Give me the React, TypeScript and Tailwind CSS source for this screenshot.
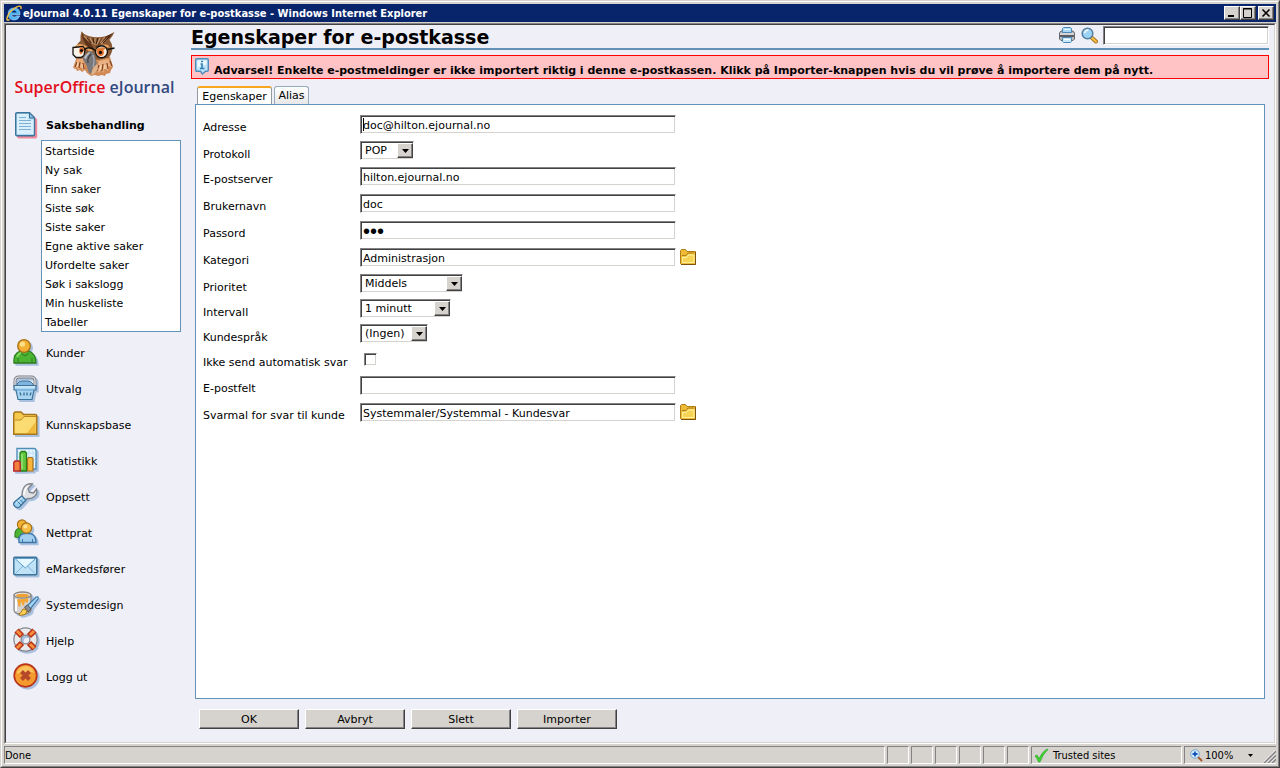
import type { ReactNode } from 'react'
import clsx from 'clsx'

// ─── Shared bevels ────────────────────────────────────────────────────────────

const SUNKEN =
  'border border-t-[#848284] border-l-[#848284] border-r-white border-b-white bg-white shadow-[inset_1px_1px_#424142,inset_-1px_-1px_#d6d3ce]'
const RAISED =
  'border border-t-white border-l-white border-r-[#424142] border-b-[#424142] bg-[#d6d3ce] shadow-[inset_-1px_-1px_#848284]'
const PANE = 'border border-t-[#848284] border-l-[#848284] border-r-white border-b-white'

// ─── Icons ────────────────────────────────────────────────────────────────────

/** 28px sidebar icon with the soft blue drop shadow. */
function NavSvg({ children, shadow = 'blue' }: { children: ReactNode; shadow?: 'blue' | 'red' }) {
  return (
    <svg
      viewBox="0 0 28 28"
      aria-hidden="true"
      className={clsx(
        'w-7 h-7 shrink-0',
        shadow === 'blue'
          ? 'drop-shadow-[2px_2px_0px_#a9c0df]'
          : 'drop-shadow-[2px_2px_0px_#f08a9c]',
      )}
    >
      {children}
    </svg>
  )
}

function DocumentIcon() {
  return (
    <NavSvg shadow="red">
      <path d="M2 .7h12.500l5 5v17q0 1-1 1H2q-1.300 0-1.300-1.300V2Q.7.7 2 .7z" fill="#a9d6f2" stroke="#3d7399" strokeWidth="1.400" />
      <path d="M2 2h11.500v5.500h5V22H2z" fill="#d9f0fc" />
      <path d="M14.500 1v5h5z" fill="#8fc3e6" stroke="#3d7399" />
      <path d="M4 5.500h7M4 8.500h12M4 11.500h12M4 14.500h12M4 17.500h12" stroke="#7db0d6" />
    </NavSvg>
  )
}

function CustomerIcon() {
  return (
    <NavSvg>
      <path d="M1 24q-1-9 6-12h9q7 3 7 12z" fill="#4cb432" stroke="#2b7a1c" strokeWidth="1.3" />
      <path d="M5 23v-4M19 23v-4M8 14l4 3 4-3" stroke="#2b7a1c" fill="none" />
      <path d="M4 18q2-4 4-4" stroke="#8be06a" fill="none" strokeWidth="1.5" />
      <circle cx="11" cy="7" r="6.300" fill="#f2b132" stroke="#a8701a" strokeWidth="1.3" />
      <circle cx="9.500" cy="5" r="2.600" fill="#fdde8a" />
    </NavSvg>
  )
}

function BasketIcon() {
  return (
    <NavSvg>
      <path d="M4 9q2-3 5-3h6q3 0 5 3v3H4z" fill="#7fb4de" stroke="#3d7399" />
      <path d="M2 12V6q0-4 4-4h12q4 0 4 4v6" fill="none" stroke="#7b7f86" strokeWidth="3" />
      <path d="M2 12V6q0-4 4-4h12q4 0 4 4v6" fill="none" stroke="#e6e8eb" strokeWidth="1.200" />
      <path d="M1 10.500h22V15h-2l-2 9.500H5L3 15H1z" fill="#a9d4f2" stroke="#3d7399" strokeWidth="1.200" />
      <path d="M2 12h20" stroke="#e2f4fe" />
      <path d="M3 15h18" stroke="#5d9cc8" />
      <path d="M7 17.500l1 3M11 17.500v3M14 17.500v3M18 17.500l-1 3" stroke="#3d7399" strokeWidth="1.400" />
    </NavSvg>
  )
}

function FolderIcon() {
  return (
    <NavSvg>
      <path d="M.7 23.300V2.500L2 1h6l2.500 2.500h11.800q1.500 0 1.500 1.500v18.300z" fill="#f5c94e" stroke="#a87419" strokeWidth="1.4" />
      <path d="M2 9h6l3-3h11.500v16H2z" fill="#fbdc72" />
      <path d="M2 9h6l3-3.500H23" fill="none" stroke="#c08a22" />
      <path d="M14 22l8.500-11v11z" fill="#efb93c" />
    </NavSvg>
  )
}

function ChartIcon() {
  return (
    <NavSvg>
      <path d="M4 1.500h17q2 0 2 2V22H4z" fill="#e6f5fd" stroke="#4f8db8" strokeWidth="1.4" />
      <path d="M5 6h18M5 10h18M5 14h18M8 2v20M12 2v20M16 2v20M20 2v20" stroke="#b6dbf0" strokeWidth=".8" />
      <path d="M7 24V6l1.500-1.500h3.500L13.500 6v18z" fill="#63c63c" stroke="#23801a" strokeWidth="1.3" />
      <path d="M14.500 24V12l1-1.500h3.500l1 1.500v12z" fill="#f7b53e" stroke="#a8701a" strokeWidth="1.2" />
      <path d="M.8 24v-8.500L2 14h4l1.200 1.500V24z" fill="#f0803c" stroke="#b8262a" strokeWidth="1.4" />
      <path d="M9 7v15" stroke="#b5ee94" />
    </NavSvg>
  )
}

function WrenchIcon() {
  return (
    <NavSvg>
      <path
        d="M9 13q0-9 5-11.500Q17 .3 19.500 1L15 5.500l1.500 4 4 .5L23.500 6q1.500 5-2 7.500-3 2.500-7 2L12 17z"
        fill="#dfe1e4"
        stroke="#7e8187"
        strokeWidth="1.3"
      />
      <path d="M11 12q0-6 4-8.500" stroke="#fff" fill="none" strokeWidth="1.400" />
      <path d="M1.500 19l7-6 4.500 4-6.500 7q-2 1.500-4.500-.5t-.5-4.500z" fill="#9fd0f2" stroke="#3d7399" strokeWidth="1.3" />
      <path d="M3.500 17.500l4.500 4.500M6 15.500l4.500 4.500" stroke="#3d7399" />
      <path d="M3 20.500l6-6" stroke="#dff3fd" />
    </NavSvg>
  )
}

function ChatIcon() {
  return (
    <NavSvg>
      <path d="M2 18q-1-8 5-9h5l1 10z" fill="#4cb432" stroke="#2b7a1c" strokeWidth="1.2" />
      <circle cx="9" cy="5.500" r="4.600" fill="#f2b132" stroke="#a8701a" strokeWidth="1.2" />
      <path d="M6 23.500q-1-8 5-9h6q6 1 6 9z" fill="#a2cff0" stroke="#3f76a8" strokeWidth="1.3" />
      <path d="M9.500 23v-3M19.500 23v-3" stroke="#3f76a8" />
      <circle cx="13.500" cy="9" r="5.200" fill="#f6bd42" stroke="#a8701a" strokeWidth="1.2" />
      <circle cx="12.300" cy="7.500" r="2" fill="#fde39a" />
    </NavSvg>
  )
}

function MailIcon() {
  return (
    <NavSvg>
      <rect x=".8" y="2.300" width="23" height="17.500" rx="1" fill="#bfe2f7" stroke="#3d7399" strokeWidth="1.5" />
      <path d="M2.500 18.500l8-8M22 18.500l-8-8" stroke="#7fb4de" />
      <path d="M2 3.500L12.300 13 22.700 3.500z" fill="#e4f6fe" stroke="#5d9cc8" />
    </NavSvg>
  )
}

function PaintIcon() {
  return (
    <NavSvg>
      <path d="M1 4v15q0 4 8 4t9-4V4z" fill="#d6d3d0" stroke="#8a8784" strokeWidth="1.2" />
      <path d="M3 8v12" stroke="#fff" strokeWidth="2" />
      <ellipse cx="9.500" cy="4" rx="8.500" ry="3" fill="#e6e4e2" stroke="#8a8784" strokeWidth="1.300" />
      <ellipse cx="9.500" cy="4.500" rx="6.500" ry="1.800" fill="#f0a030" />
      <path d="M4 8q5 1 11-1v4q-2 2-3-1l-1 4q-2 2-2-2l-1-1-1 5q-2 0-2-4z" fill="#f4a733" />
      <path d="M14 15L23 6q3-1 2 2l-8 10z" fill="#a4d2f4" stroke="#3f76a8" strokeWidth="1.200" />
      <path d="M11.500 16l3-2 3.500 4-3 3z" fill="#8a8d93" stroke="#55585e" />
      <path d="M6 23q2-1 4-5 3-1 4 3-2 4-8 3z" fill="#f9cf56" stroke="#a8701a" />
    </NavSvg>
  )
}

function LifebuoyIcon() {
  return (
    <NavSvg>
      <circle cx="12.500" cy="12.500" r="8" fill="none" stroke="#84868b" strokeWidth="8.400" />
      <circle cx="12.500" cy="12.500" r="8" fill="none" stroke="#e9eaec" strokeWidth="6" />
      <path d="M3.500 3.500L9 9M21.500 3.500L16 9M3.500 21.500L9 16M21.500 21.500L16 16" stroke="#b93018" strokeWidth="6" />
      <path d="M4 4l4 4M21 4l-4 4M4 21l4-4M21 21l-4-4" stroke="#f7903c" strokeWidth="3" />
    </NavSvg>
  )
}

function LogoutIcon() {
  return (
    <NavSvg>
      <circle cx="12.500" cy="12.500" r="11.300" fill="#f59a2e" stroke="#b8321c" strokeWidth="1.700" />
      <path d="M3.500 11q2-8 10-8 6 1 8 7-8-3-18 1z" fill="#fcc35a" />
      <path d="M8.500 8.500l8 8M16.500 8.500l-8 8" stroke="#b5472b" strokeWidth="4" />
    </NavSvg>
  )
}

function OwlLogo() {
  return (
    <svg viewBox="0 0 46 46" aria-hidden="true" className="w-[46px] h-[46px]">
      {/* breast feathers */}
      <path d="M5 25L1 37l3 1 1 2 3-1 2 2 3-2 2 3 4 3 4-1 3 1 4-1 3 1 1-2 4-1 1-3 2-3-3-10-8-4z" fill="#cf8a55" />
      <path d="M5 28L2 37l3-1 1 3 3-3 2 4 2-4-2-8z" fill="#e9a877" />
      <path d="M27 30l-3 9 3 3 2-4 2 4 2-5 3 3 1-5 3 1-4-8z" fill="#e9b183" />
      <path d="M5 31l-2 5M8 31l-1 6M11 32l1 6M27 34l-2 6M31 33l-1 7M35 32l1 6M38 30l2 5" stroke="#84441f" strokeWidth="1.200" />
      <path d="M6 31l-1 5M10 33v4M29 34l-1 5M33 34v4" stroke="#fbe0bd" />
      {/* head and ear tufts */}
      <path d="M9.500.3q3 4 8 5 4 1 7 1 11 0 18-5.500-2 5-5 8 3 4 3 9-1 6-4 9l-10 2-15-1-8-7q-1-6 5-11Q8 5 9.500.3z" fill="#8a5a35" />
      <path d="M10 2q3 7 9 11l3 5-6-2Q10 10 10 2zM41 2q-6 9-13 11l-5 5q3-10 18-16z" fill="#5c3218" />
      <path d="M12 5l5 5M18 7l3 6M23 7v7M28 7l-3 7M33 6l-5 6M36 7l-7 6" stroke="#c99a6c" strokeWidth="1.100" />
      <path d="M15 7l4 5M21 7l1 5M26 7l-2 6M38 5l-7 7" stroke="#3a1d0d" />
      {/* brows */}
      <path d="M3 15q5-4 11 0l7 4-2 3-6-5q-5-2-10 0zM23 18q6-6 13-4l2 3q-7-3-14 5z" fill="#e7a35f" />
      {/* eyes and glasses */}
      <path d="M1 16.500l10-1 2 3-1 6-3 2H4l-3-3z" fill="#faf3ea" stroke="#15110f" strokeWidth="1.300" />
      <path d="M8 16.500q4-1 4 3l-3 4q-3-2-1-7z" fill="#df6c2b" />
      <circle cx="9.500" cy="19.500" r="1.600" fill="#16100c" />
      <circle cx="29.500" cy="20.800" r="6" fill="#f8ede0" stroke="#15110f" strokeWidth="1.400" />
      <path d="M24 18q5-3 10-1l-2 2-7 2z" fill="#d8843e" />
      <circle cx="28.500" cy="21.500" r="3.400" fill="#e8702a" />
      <circle cx="28.500" cy="21.500" r="1.700" fill="#16100c" />
      <path d="M35.500 18.500l7-1.500M12 18.500q5-4 11.500 1" fill="none" stroke="#15110f" strokeWidth="1.500" />
      {/* beak */}
      <path d="M18 20q3 0 5 5l2 8-4 4-2 6q-3-1-4-8l-3-5-1.500-3q3-5 7.500-7z" fill="#77777c" />
      <path d="M17 21q-4 3-5 6l2 1q1-4 4-6z" fill="#c2c3c8" />
      <path d="M19 23q-4 4-3 9" fill="none" stroke="#38383d" strokeWidth="1.100" />
      <path d="M21 24q2 5 0 12" fill="none" stroke="#a9aaaf" strokeWidth="1.300" />
      <path d="M25 33l1 5-4 5-3 1 2-7z" fill="#dfb28a" />
    </svg>
  )
}

function PrinterIcon() {
  return (
    <svg viewBox="0 0 16 16" aria-hidden="true" className="w-4 h-4">
      <path d="M2 4h12l1.500 2v6L14 13.500H2L.5 12V6z" fill="#b9bbbf" stroke="#63676e" />
      <path d="M3.500 5.500v-4l1-1h7l1 1v4z" fill="#a8d8f5" stroke="#4d89b4" />
      <path d="M5 2.500h6" stroke="#e8f7ff" />
      <path d="M1 7h14" stroke="#eeeff0" />
      <path d="M1 9h14" stroke="#5a5e64" strokeWidth="2" />
      <path d="M3.500 10.500h9v4l-1 1h-7l-1-1z" fill="#c7e8fa" stroke="#4d89b4" />
      <path d="M5 12.500h6" stroke="#fff" />
    </svg>
  )
}

function SearchIcon() {
  return (
    <svg viewBox="0 0 17 17" aria-hidden="true" className="w-[17px] h-[17px]">
      <path d="M10 10l5 4.500" stroke="#a8701a" strokeWidth="4" strokeLinecap="round" />
      <path d="M10.500 10.500l4.500 4" stroke="#f8c14a" strokeWidth="2" strokeLinecap="round" />
      <circle cx="6.500" cy="6.500" r="5.300" fill="#9dd3f5" stroke="#557f9f" strokeWidth="1.500" />
      <path d="M3.500 6q1-3 4-3" fill="none" stroke="#fff" strokeWidth="1.500" />
    </svg>
  )
}

function InfoIcon() {
  return (
    <svg viewBox="0 0 14 17" aria-hidden="true" className="w-[14px] h-[17px] shrink-0">
      <path d="M2 .7h10q1.300 0 1.300 1.300v10q0 1.300-1.300 1.300h-1.500L7.500 16l-2-2.700H2Q.7 13.300.7 12V2Q.7.700 2 .700z" fill="#bfe4f8" stroke="#4d8cba" strokeWidth="1.400" />
      <path d="M2.500 2.500h9v4q-5 0-9 3z" fill="#eaf8ff" />
      <path d="M6 3.500h2M5.500 6H7v4M5 10.500h4.500" stroke="#2f7fb8" strokeWidth="1.600" fill="none" />
    </svg>
  )
}

function SmallFolderIcon() {
  return (
    <svg viewBox="0 0 16 16" aria-hidden="true" className="w-4 h-4">
      <path d="M.5 14.500V1.500L1.500.500h4L7 2.500h8.500v13h-14z" fill="#eebb36" stroke="#b07d17" />
      <path d="M2 14V7.500h4L8 5h6.500v9z" fill="#f7d355" />
      <path d="M2.500 13.500v-5h4L8.500 6H14v7.500z" stroke="#fff0a0" fill="none" />
      <path d="M2 6.500h4l2-2.500h6" stroke="#b07d17" fill="none" />
      <path d="M1 15.500h14.500V3" stroke="#7d520e" fill="none" />
    </svg>
  )
}

function IeIcon() {
  return (
    <svg viewBox="0 0 16 16" aria-hidden="true" className="w-4 h-4">
      <path d="M14 9.800H5.500q.3 2.200 2.700 2.200 1.500 0 2.300-1h3.200q-1.500 4-5.500 4-6-.5-6-6 0-6 6-6 6 0 5.800 6.800z" fill="#4fb2f2" stroke="#c3e8fd" strokeWidth=".6" />
      <path d="M5.700 7.500h4.800q-.5-2-2.400-2T5.700 7.500z" fill="#0a246a" />
      <path d="M3.500 14.500q-3 1.500-2.500-1Q2 8 7.500 4T14.500 1.500q1 .5.300 2.500" fill="none" stroke="#f3c13a" strokeWidth="1.400" />
    </svg>
  )
}

function DownArrow() {
  return (
    <svg viewBox="0 0 7 4" aria-hidden="true" className="w-[7px] h-1">
      <path d="M0 0h7L3.500 4z" fill="#000" />
    </svg>
  )
}

// ─── Title bar ────────────────────────────────────────────────────────────────

function TitleBar() {
  const button = clsx(RAISED, 'w-4 h-[14px] flex items-center justify-center')
  return (
    <header className="h-[18px] shrink-0 bg-[#08246b] flex items-center pl-[2px] pr-[2px]">
      <IeIcon />
      <h1 className="flex-1 pl-px pt-px font-['DejaVu_Sans_Condensed','DejaVu_Sans',sans-serif] font-bold text-[11px] leading-4 text-white whitespace-nowrap">
        eJournal 4.0.11 Egenskaper for e-postkasse - Windows Internet Explorer
      </h1>
      <button type="button" aria-label="Minimize" className={button}>
        <svg viewBox="0 0 10 10" className="w-[10px] h-[10px]"><path d="M1 8h6" stroke="#000" strokeWidth="2" /></svg>
      </button>
      <button type="button" aria-label="Maximize" className={button}>
        <svg viewBox="0 0 10 10" className="w-[10px] h-[10px]"><path d="M.5 9.500v-9h8v9zM0 1h9" stroke="#000" fill="none" /></svg>
      </button>
      <button type="button" aria-label="Close" className={clsx(button, 'ml-[2px]')}>
        <svg viewBox="0 0 10 10" className="w-[10px] h-[10px]"><path d="M1.500 1.500l7 7M8.500 1.500l-7 7" stroke="#000" strokeWidth="1.600" /></svg>
      </button>
    </header>
  )
}

// ─── Sidebar ──────────────────────────────────────────────────────────────────

const SUBMENU = [
  'Startside',
  'Ny sak',
  'Finn saker',
  'Siste søk',
  'Siste saker',
  'Egne aktive saker',
  'Ufordelte saker',
  'Søk i sakslogg',
  'Min huskeliste',
  'Tabeller',
]

const MODULES = [
  { label: 'Kunder', Icon: CustomerIcon },
  { label: 'Utvalg', Icon: BasketIcon },
  { label: 'Kunnskapsbase', Icon: FolderIcon },
  { label: 'Statistikk', Icon: ChartIcon },
  { label: 'Oppsett', Icon: WrenchIcon },
  { label: 'Nettprat', Icon: ChatIcon },
  { label: 'eMarkedsfører', Icon: MailIcon },
  { label: 'Systemdesign', Icon: PaintIcon },
  { label: 'Hjelp', Icon: LifebuoyIcon },
  { label: 'Logg ut', Icon: LogoutIcon },
]

function Sidebar() {
  return (
    <aside className="w-[185px] shrink-0">
      <div className="flex flex-col items-center pt-[6px] pr-[8px] h-[82px]">
        <OwlLogo />
        <div className="font-['Open_Sans','Noto_Sans',sans-serif] font-semibold text-[16px] leading-5 whitespace-nowrap text-[#e30f1c]">
          SuperOffice <span className="text-[#33497f]">eJournal</span>
        </div>
      </div>

      <nav>
        <a href="#saksbehandling" className="flex items-center gap-[5px] pl-[7px] h-[33px] pt-1 font-bold">
          <span className="pl-[2px] -mr-[2px] flex"><DocumentIcon /></span>
          Saksbehandling
        </a>
        <ul className="ml-[35px] mr-[10px] bg-white border border-[#6392b9]">
          {SUBMENU.map(item => (
            <li key={item} className="h-[19px] pl-[3px] pt-[3px]">
              <a href="#meny">{item}</a>
            </li>
          ))}
        </ul>
        <ul className="pt-[3px]">
          {MODULES.map(({ label, Icon }) => (
            <li key={label}>
              <a href="#modul" className="flex items-center gap-[5px] pl-[7px] h-9">
                <Icon />
                <span className="pt-[2px]">{label}</span>
              </a>
            </li>
          ))}
        </ul>
      </nav>
    </aside>
  )
}

// ─── Form ─────────────────────────────────────────────────────────────────────

interface RowProps {
  id: string
  label: string
  /** Height of the row; differs per control type. */
  height: string
  children: ReactNode
}

function Row({ id, label, height, children }: RowProps) {
  return (
    <div className={clsx('flex items-start', height)}>
      <label htmlFor={id} className="w-[157px] shrink-0 pt-[9px] leading-4 whitespace-nowrap">
        {label}
      </label>
      {children}
    </div>
  )
}

interface TextRowProps {
  id: string
  label: string
  value?: string
  type?: 'text' | 'password'
  browse?: boolean
  caret?: boolean
}

function TextRow({ id, label, value = '', type = 'text', browse, caret }: TextRowProps) {
  return (
    <Row id={id} label={label} height="h-[27px]">
      <span className="relative flex mt-1">
        <input
          id={id}
          type={type}
          defaultValue={value}
          className={clsx(
            SUNKEN,
            'w-[316px] h-[19px] px-[2px] pt-px outline-none',
            type === 'password' && "font-['Liberation_Sans',sans-serif] text-[20px]",
          )}
        />
        {caret && <span className="absolute left-[3px] top-[3px] w-px h-[13px] bg-black" />}
      </span>
      {browse && (
        <button type="button" aria-label={`Velg ${label}`} className="ml-1 mt-[5px]">
          <SmallFolderIcon />
        </button>
      )}
    </Row>
  )
}

function SelectRow({ id, label, value, width }: { id: string; label: string; value: string; width: string }) {
  return (
    <Row id={id} label={label} height="h-[25px]">
      <span className="relative flex mt-[3px]">
        <select id={id} className={clsx(SUNKEN, width, 'h-[19px] pl-1 pt-px appearance-none outline-none')}>
          <option>{value}</option>
        </select>
        <span
          className={clsx(
            RAISED,
            'absolute right-px top-[2px] w-4 h-[15px] flex items-center justify-center pointer-events-none',
          )}
        >
          <DownArrow />
        </span>
      </span>
    </Row>
  )
}

function MailboxForm() {
  return (
    <form id="mailbox" className="flex-1 bg-white border border-[#6392b9] pl-[7px] pt-[6px]">
      <TextRow id="adresse" label="Adresse" value="doc@hilton.ejournal.no" caret />
      <SelectRow id="protokoll" label="Protokoll" value="POP" width="w-[54px]" />
      <TextRow id="server" label="E-postserver" value="hilton.ejournal.no" />
      <TextRow id="bruker" label="Brukernavn" value="doc" />
      <TextRow id="passord" label="Passord" value="doc" type="password" />
      <TextRow id="kategori" label="Kategori" value="Administrasjon" browse />
      <SelectRow id="prioritet" label="Prioritet" value="Middels" width="w-[103px]" />
      <SelectRow id="intervall" label="Intervall" value="1 minutt" width="w-[91px]" />
      <SelectRow id="sprak" label="Kundespråk" value="(Ingen)" width="w-[68px]" />
      <Row id="autosvar" label="Ikke send automatisk svar" height="h-[26px]">
        <input id="autosvar" type="checkbox" className={clsx(SUNKEN, 'appearance-none w-[13px] h-[13px] ml-1 mt-[7px]')} />
      </Row>
      <TextRow id="postfelt" label="E-postfelt" />
      <TextRow id="svarmal" label="Svarmal for svar til kunde" value="Systemmaler/Systemmal - Kundesvar" browse />
    </form>
  )
}

// ─── Main area ────────────────────────────────────────────────────────────────

function MainArea() {
  return (
    <main className="flex-1 min-w-0 flex flex-col pr-[5px] pb-[13px]">
      <div className="h-[25px] flex items-start border-b-2 border-[#6392b9]">
        <h2 className="flex-1 font-bold text-[19px] leading-6">Egenskaper for e-postkasse</h2>
        <button type="button" aria-label="Skriv ut" className="pt-[2px] mr-[6px]"><PrinterIcon /></button>
        <button type="button" aria-label="Søk" className="pt-[2px] mr-[5px]"><SearchIcon /></button>
        <input type="text" aria-label="Søketekst" className={clsx(SUNKEN, 'w-[166px] h-[19px] mt-px px-[2px] outline-none')} />
      </div>

      <div role="alert" className="mt-[5px] h-6 flex items-start gap-[5px] bg-[#ffc3c6] border border-[#ff0000] pl-[3px] pt-[2px]">
        <InfoIcon />
        <strong className="pt-[5px] leading-4 whitespace-nowrap">
          Advarsel! Enkelte e-postmeldinger er ikke importert riktig i denne e-postkassen. Klikk på Importer-knappen hvis du vil prøve å importere dem på nytt.
        </strong>
      </div>

      <div className="flex-1 flex flex-col pl-1 pr-1 pt-[7px]">
        <div role="tablist" className="flex items-end gap-[2px] pl-[2px] -mb-px">
          <button
            type="button"
            role="tab"
            aria-selected="true"
            className="h-[19px] w-[75px] bg-white border-x border-[#949a9c] border-t-2 border-t-[#f7a621] rounded-t-[3px] leading-4 whitespace-nowrap"
          >
            Egenskaper
          </button>
          <button
            type="button"
            role="tab"
            aria-selected="false"
            className="h-[18px] w-[35px] mb-px pt-px bg-linear-to-b from-white to-[#e7e7e7] border border-b-0 border-[#94aabd] rounded-t-[3px] leading-4"
          >
            Alias
          </button>
        </div>
        <MailboxForm />
        <div className="flex gap-[6px] pt-[10px] pl-1">
          {['OK', 'Avbryt', 'Slett', 'Importer'].map(label => (
            <button key={label} type="button" className={clsx(RAISED, 'w-[100px] h-5 pt-px leading-4')}>
              {label}
            </button>
          ))}
        </div>
      </div>
    </main>
  )
}

// ─── Status bar ───────────────────────────────────────────────────────────────

function StatusBar() {
  return (
    <footer className="shrink-0 h-5 pt-[2px] flex gap-[2px] font-['DejaVu_Sans_Condensed','DejaVu_Sans',sans-serif] text-[11px] leading-4 whitespace-nowrap">
      <div className={clsx(PANE, 'flex-1 pt-px')}>Done</div>
      {[0, 1, 2, 3, 4, 5].map(i => (
        <div key={i} className={clsx(PANE, 'w-[22px]')} />
      ))}
      <div className={clsx(PANE, 'w-[151px] flex items-center gap-1 pl-[2px]')}>
        <svg viewBox="0 0 15 15" aria-hidden="true" className="w-[15px] h-[15px]">
          <path d="M1 8l2-1 2 3.500Q8 4 13 1l1 .5Q9 6 6 14H4.500Q3 10 1 8z" fill="#42d331" stroke="#20a01c" strokeWidth=".6" />
        </svg>
        <span className="pt-px">Trusted sites</span>
      </div>
      <div className={clsx(PANE, 'w-[92px] border-r-0 flex items-center pl-[5px]')}>
        <svg viewBox="0 0 13 13" aria-hidden="true" className="w-[13px] h-[13px] mr-[2px]">
          <path d="M8 8l4 4" stroke="#a85a2a" strokeWidth="2" />
          <circle cx="5" cy="5" r="4.300" fill="#d5ecfb" stroke="#7aa6cc" />
          <path d="M5 2.500v5M2.500 5h5" stroke="#1557b8" strokeWidth="1.800" />
        </svg>
        <span className="flex-1 pt-px">100%</span>
        <svg viewBox="0 0 5 3" aria-hidden="true" className="w-[5px] h-[3px] mr-[10px]"><path d="M0 0h5L2.500 3z" /></svg>
        <svg viewBox="0 0 13 13" aria-hidden="true" className="w-[13px] h-[13px] self-end">
          <path d="M1 13L13 1M5 13l8-8M9 13l4-4" stroke="#848284" strokeWidth="1.600" />
          <path d="M0 12.500L12.500 0M4 12.500L13 3.500M8 12.500l5-5" stroke="#fff" strokeWidth=".8" />
        </svg>
      </div>
    </footer>
  )
}

export default function App() {
  return (
    <div className="min-h-screen flex flex-col border border-t-[#d6d3ce] border-l-[#d6d3ce] border-r-[#424142] border-b-[#424142] font-['DejaVu_Sans',Verdana,sans-serif] text-[11px] leading-4 text-black">
      <div className="flex-1 flex flex-col bg-[#d6d3ce] border border-t-white border-l-white border-r-[#848284] border-b-[#848284] p-[2px]">
        <TitleBar />
        <div className="flex-1 flex flex-col mt-px border border-t-[#848284] border-l-[#848284] border-r-white border-b-white">
          <div className="flex-1 flex bg-[#efeff7] border border-t-[#424142] border-l-[#424142] border-r-[#d6d3ce] border-b-[#d6d3ce]">
            <Sidebar />
            <MainArea />
          </div>
        </div>
        <StatusBar />
      </div>
    </div>
  )
}
